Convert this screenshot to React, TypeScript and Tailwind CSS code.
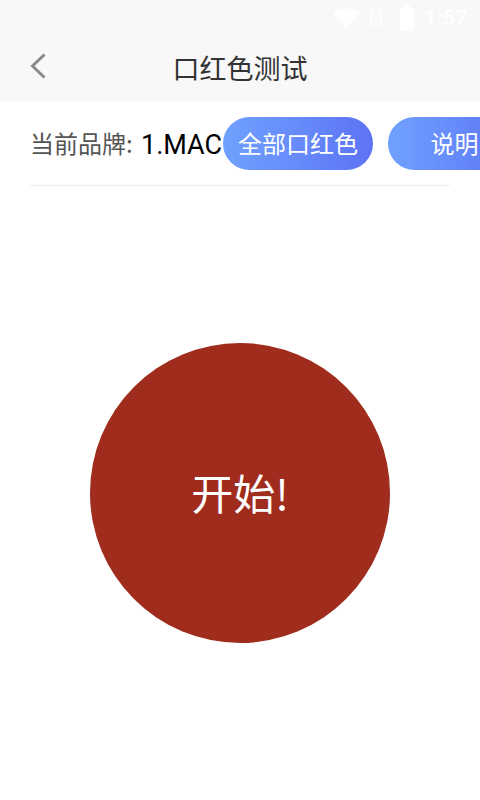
const font = { fontFamily: '"Noto Sans CJK SC", Roboto, sans-serif' };

function StatusBar() {
  return (
    <div className="h-9 flex items-center justify-end pr-3 gap-[10px] text-white">
      <svg width="26" height="20" viewBox="0 0 26 20" fill="currentColor">
        <path d="M0 5.500C3.500 2 8 .5 13 .5s9.500 1.500 13 5L13 19.500Z" />
      </svg>
      <svg width="14" height="20" viewBox="0 0 14 20" fill="currentColor" opacity="0.6">
        <path d="M1 2h12v16H1zM4 5v10h2V5zM8 5v10h2V5z" fillRule="evenodd" />
      </svg>
      <svg width="16" height="26" viewBox="0 0 16 26" fill="currentColor" className="ml-[6px]">
        <path d="M5 0h6v3h4v23H1V3h4z" />
      </svg>
      <span className="text-[21px] font-medium leading-none tracking-wide" style={{ fontFamily: "Roboto, sans-serif" }}>
        1:57
      </span>
    </div>
  );
}

function Header() {
  return (
    <div className="bg-[#f8f8f8] h-[102px]">
      <StatusBar />
      <div className="h-[66px] relative flex items-center justify-center pb-[4px]">
        <svg
          className="absolute left-[30px] top-[17px]"
          width="16"
          height="26"
          viewBox="0 0 16 26"
          fill="none"
          stroke="#8a8a8a"
          strokeWidth="3"
        >
          <path d="M14.500 1.500 2.500 13l12 11.500" />
        </svg>
        <span className="text-[27px] text-[#333] leading-none">口红色测试</span>
      </div>
    </div>
  );
}

export default function App() {
  return (
    <div className="w-[480px] h-[800px] bg-white overflow-hidden" style={font}>
      <Header />
      <div className="mx-[30px] h-[84px] border-b border-[#eeeeee] flex items-center whitespace-nowrap">
        <span className="text-[24px] text-[#555] w-[111px] shrink-0 pb-[2px]">当前品牌:</span>
        <span className="text-[27px] text-black w-[82px] shrink-0 pt-[3px]" style={{ fontFamily: "Roboto, sans-serif" }}>
          1.MAC
        </span>
        <div className="w-[150px] h-[53px] shrink-0 rounded-full bg-gradient-to-r from-[#70a1ff] to-[#5d73f5] text-white text-[24px] flex items-center justify-center pb-[2px]">
          全部口红色
        </div>
        <div className="w-[133px] h-[53px] shrink-0 ml-[15px] rounded-full bg-gradient-to-r from-[#70a1ff] to-[#5d73f5] text-white text-[24px] flex items-center justify-center pb-[2px]">
          说明
        </div>
      </div>
      <div className="flex justify-center pt-[157px]">
        <div className="w-[300px] h-[300px] rounded-full bg-[#a02c1e] text-white text-[42px] flex items-center justify-center pb-[4px]">
          开始!
        </div>
      </div>
    </div>
  );
}
